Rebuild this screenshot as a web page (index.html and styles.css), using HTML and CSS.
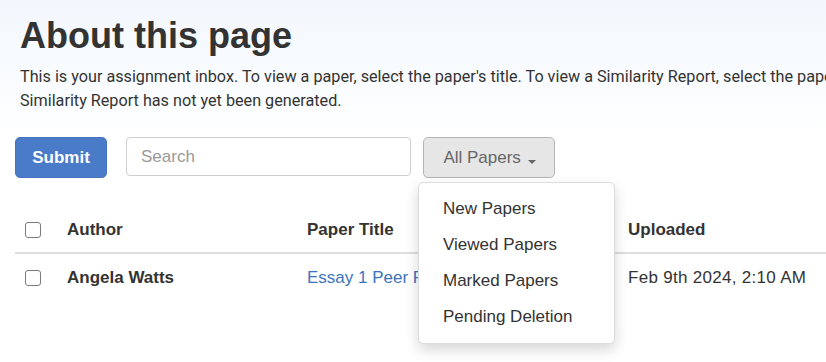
FILE: index.html
```html
<!DOCTYPE html>
<html lang="en">
<head>
<meta charset="utf-8">
<title>Assignment inbox</title>
<link rel="stylesheet" href="styles.css">
</head>
<body>
<main class="page">
  <h1 class="title">About this page</h1>
  <p class="intro">This is your assignment inbox. To view a paper, select the paper's title. To view a Similarity Report, select the paper's Similarity Report icon in the similarity column. A ghosted icon indicates that the<br>Similarity Report has not yet been generated.</p>

  <div class="toolbar">
    <button class="btn btn-primary" type="button">Submit</button>
    <input class="search" type="text" placeholder="Search">
    <div class="filter">
      <button class="btn btn-filter" type="button">All Papers <span class="caret"></span></button>
      <ul class="menu">
        <li>New Papers</li>
        <li>Viewed Papers</li>
        <li>Marked Papers</li>
        <li>Pending Deletion</li>
      </ul>
    </div>
  </div>

  <div class="table">
    <div class="row head">
      <div class="cell check"><span class="box"></span></div>
      <div class="cell">Author</div>
      <div class="cell">Paper Title</div>
      <div class="cell">Uploaded</div>
    </div>
    <div class="row">
      <div class="cell check"><span class="box"></span></div>
      <div class="cell author">Angela Watts</div>
      <div class="cell"><a class="paper" href="#">Essay 1 Peer Review</a></div>
      <div class="cell date">Feb 9th 2024, 2:10 AM</div>
    </div>
  </div>
</main>
</body>
</html>
```

FILE: styles.css
```css
html, body {
  margin: 0;
  padding: 0;
}

body {
  width: 826px;
  height: 362px;
  overflow: hidden;
  background: linear-gradient(#f3f7fd 0, #fbfdff 100px, #ffffff 135px);
  font-family: "Liberation Sans", Arial, Helvetica, sans-serif;
  color: #333;
}

.page {
  padding: 0 0 0 15px;
}

.title {
  margin: 0;
  padding: 16px 0 0 5px;
  font-size: 36px;
  line-height: 40px;
  font-weight: bold;
  color: #333;
}

.intro {
  margin: 9px 0 0;
  padding-left: 5px;
  font-family: Roboto, "Liberation Sans", sans-serif;
  font-size: 16.2px;
  line-height: 24px;
  color: #333;
  white-space: nowrap;
}

.toolbar {
  display: flex;
  align-items: flex-start;
  margin-top: 24px;
}

.btn {
  font-family: "Liberation Sans", Arial, sans-serif;
  font-size: 17px;
  height: 41px;
  border-radius: 5px;
  padding: 0 16px;
  cursor: pointer;
}

.btn-primary {
  width: 92px;
  background: #4a7bc8;
  border: 1px solid #4674bf;
  color: #fff;
  font-weight: bold;
}

.search {
  box-sizing: border-box;
  width: 285px;
  height: 39px;
  margin-left: 19px;
  padding: 0 14px;
  border: 1px solid #cfcfcf;
  border-radius: 4px;
  background: #fff;
  font-family: "Liberation Sans", Arial, sans-serif;
  font-size: 17px;
  color: #333;
}

.search::placeholder {
  color: #999;
}

.filter {
  position: relative;
  margin-left: 12px;
}

.btn-filter {
  width: 132px;
  background: #e6e6e6;
  border: 1px solid #b4b4b4;
  color: #666;
  padding: 0 0 0 1px;
  text-align: center;
}

.caret {
  display: inline-block;
  width: 0;
  height: 0;
  margin-left: 2px;
  vertical-align: -1px;
  border-top: 4px solid #666;
  border-left: 4px solid transparent;
  border-right: 4px solid transparent;
}

.menu {
  position: absolute;
  top: 45px;
  left: -5px;
  z-index: 10;
  box-sizing: border-box;
  width: 197px;
  margin: 0;
  padding: 8px 0;
  list-style: none;
  background: #fff;
  border: 1px solid #dcdcdc;
  border-radius: 5px;
  box-shadow: 0 6px 14px rgba(0, 0, 0, 0.16);
}

.menu li {
  height: 36px;
  line-height: 36px;
  padding-left: 24px;
  font-size: 17px;
  color: #333;
}

.table {
  margin-top: 34px;
}

.row {
  display: grid;
  grid-template-columns: 52px 240px 321px 1fr;
  align-items: center;
  padding: 8px 0 12px;
  font-size: 17px;
  line-height: 20px;
}

.row.head {
  font-weight: bold;
  border-bottom: 2px solid #dedede;
}

.row:not(.head) {
  padding-top: 14px;
}

.cell {
  white-space: nowrap;
  overflow: hidden;
}

.check {
  display: flex;
  align-items: center;
  padding-left: 10px;
}

.box {
  box-sizing: border-box;
  display: block;
  width: 16px;
  height: 16px;
  border: 1px solid #7a7a7a;
  border-radius: 3px;
  background: #fff;
}

.author {
  font-weight: bold;
}

.date {
  letter-spacing: 0.3px;
}

.paper {
  color: #3b74bb;
  text-decoration: none;
}
```
